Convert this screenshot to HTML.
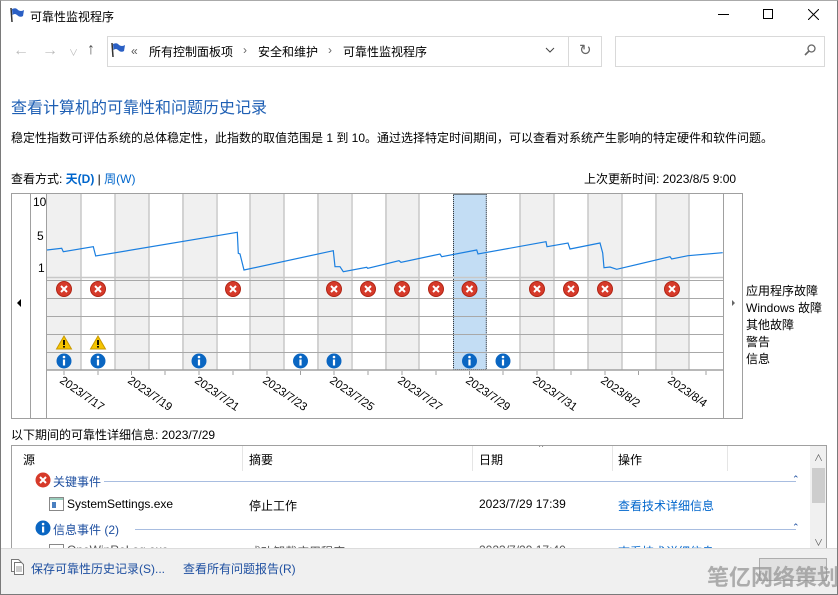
<!DOCTYPE html>
<html><head><meta charset="utf-8">
<style>
*{margin:0;padding:0;box-sizing:border-box}
body{width:838px;height:595px;overflow:hidden;background:#fff;font-family:"Liberation Sans","Noto Sans CJK SC",sans-serif;font-size:12px;color:#000;position:relative}
.a{position:absolute;white-space:nowrap}
.blue{color:#0066cc}
</style></head><body>
<div class="a" style="left:0;top:0;width:838px;height:595px;border:1px solid #7a7a7a;border-top:1px solid #aaa"></div>
<!-- title bar -->
<svg class="a" style="left:9px;top:7px" width="16" height="16" viewBox="0 0 16 16"><path d="M2 1 L3 15" stroke="#333" stroke-width="1.5"/><path d="M3 2 Q7 0 9 3 Q12 5 15 3 L14 9 Q11 11 8 8 Q6 6 3.5 8 Z" fill="#2a5fc4"/></svg>
<div class="a" style="left:30px;top:8px;font-size:12px">可靠性监视程序</div>
<div class="a" style="left:718px;top:14px;width:11px;height:1px;background:#000"></div>
<div class="a" style="left:763px;top:9px;width:10px;height:10px;border:1px solid #000"></div>
<svg class="a" style="left:808px;top:9px" width="11" height="11"><path d="M0 0L11 11M11 0L0 11" stroke="#000" stroke-width="1"/></svg>
<!-- nav -->
<div class="a" style="left:13px;top:42px;color:#bbb;font-size:16px">←</div>
<div class="a" style="left:42px;top:42px;color:#bbb;font-size:16px">→</div>
<div class="a" style="left:69px;top:46px;color:#bbb;font-size:9px">∨</div>
<div class="a" style="left:87px;top:41px;color:#555;font-size:16px">↑</div>
<div class="a" style="left:107px;top:36px;width:495px;height:31px;border:1px solid #d9d9d9"></div>
<div class="a" style="left:568px;top:36px;width:1px;height:31px;background:#d9d9d9"></div>
<svg class="a" style="left:110px;top:42px" width="16" height="16" viewBox="0 0 16 16"><path d="M2 1 L3 15" stroke="#333" stroke-width="1.5"/><path d="M3 2 Q7 0 9 3 Q12 5 15 3 L14 9 Q11 11 8 8 Q6 6 3.5 8 Z" fill="#2a5fc4"/></svg>
<div class="a" style="left:131px;top:44px;color:#555">«</div>
<div class="a" style="left:149px;top:43px">所有控制面板项</div>
<div class="a" style="left:243px;top:43px;color:#666">›</div>
<div class="a" style="left:258px;top:43px">安全和维护</div>
<div class="a" style="left:328px;top:43px;color:#666">›</div>
<div class="a" style="left:343px;top:43px">可靠性监视程序</div>
<svg class="a" style="left:545px;top:47px" width="10" height="7"><path d="M1 1L5 5L9 1" stroke="#444" fill="none"/></svg>
<div class="a" style="left:579px;top:41px;color:#666;font-size:15px">↻</div>
<div class="a" style="left:615px;top:36px;width:210px;height:31px;border:1px solid #d9d9d9"></div>
<svg class="a" style="left:804px;top:44px" width="12" height="13"><circle cx="7.5" cy="4.5" r="3.5" stroke="#666" fill="none" stroke-width="1.3"/><path d="M5 7L1 11" stroke="#666" stroke-width="1.6"/></svg>
<!-- headings -->
<div class="a" style="left:11px;top:94px;font-size:16px;color:#1e5fb4">查看计算机的可靠性和问题历史记录</div>
<div class="a" style="left:11px;top:129px">稳定性指数可评估系统的总体稳定性，此指数的取值范围是 1 到 10。通过选择特定时间期间，可以查看对系统产生影响的特定硬件和软件问题。</div>
<div class="a" style="left:11px;top:170px">查看方式: <span class="blue" style="font-weight:bold">天(D)</span> | <span class="blue">周(W)</span></div>
<div class="a" style="left:584px;top:170px">上次更新时间: 2023/8/5 9:00</div>
<!-- chart -->
<svg class="a" style="left:0;top:0" width="838" height="420" font-family="Liberation Sans,Noto Sans CJK SC,sans-serif" font-size="12">
<defs>
<g id="er"><circle r="7.5" fill="#d63a2a"/><circle r="7.5" fill="none" stroke="#b02414"/><path d="M-3 -3L3 3M3 -3L-3 3" stroke="#fff" stroke-width="2"/></g>
<g id="in"><circle r="7.5" fill="#0a66c2"/><rect x="-1.1" y="-1.5" width="2.2" height="6" fill="#fff"/><circle cy="-4" r="1.3" fill="#fff"/></g>
<g id="wa"><path d="M0 -7L7.5 6H-7.5Z" fill="#f5c400" stroke="#c99a00"/><rect x="-0.9" y="-3" width="1.8" height="5" fill="#000"/><rect x="-0.9" y="3" width="1.8" height="1.6" fill="#000"/></g>
</defs>
<rect x="11.5" y="193.5" width="731" height="225" fill="#fff" stroke="#a0a0a0"/>
<line x1="30.5" y1="193" x2="30.5" y2="418" stroke="#a0a0a0"/>
<line x1="46.5" y1="193" x2="46.5" y2="418" stroke="#a0a0a0"/>
<line x1="723.5" y1="193" x2="723.5" y2="418" stroke="#a0a0a0"/>
<g fill="#f0f0f0">
<rect x="47" y="194" width="34" height="176"/><rect x="115" y="194" width="34" height="176"/><rect x="182" y="194" width="34" height="176"/><rect x="250" y="194" width="34" height="176"/><rect x="317" y="194" width="34" height="176"/><rect x="385" y="194" width="34" height="176"/><rect x="520" y="194" width="34" height="176"/><rect x="588" y="194" width="34" height="176"/><rect x="655" y="194" width="34" height="176"/>
</g>
<rect x="453" y="194" width="33.8" height="176" fill="#c3ddf4"/>
<rect x="453.5" y="194.5" width="32.8" height="175" fill="none" stroke="#222" stroke-dasharray="1 1"/>
<g stroke="#c8c8c8" stroke-width="1.5">
<line x1="81" y1="194" x2="81" y2="370"/><line x1="115" y1="194" x2="115" y2="370"/><line x1="149" y1="194" x2="149" y2="370"/><line x1="183" y1="194" x2="183" y2="370"/><line x1="217" y1="194" x2="217" y2="370"/><line x1="250" y1="194" x2="250" y2="370"/><line x1="284" y1="194" x2="284" y2="370"/><line x1="318" y1="194" x2="318" y2="370"/><line x1="352" y1="194" x2="352" y2="370"/><line x1="386" y1="194" x2="386" y2="370"/><line x1="419" y1="194" x2="419" y2="370"/><line x1="520" y1="194" x2="520" y2="370"/><line x1="554" y1="194" x2="554" y2="370"/><line x1="588" y1="194" x2="588" y2="370"/><line x1="622" y1="194" x2="622" y2="370"/><line x1="656" y1="194" x2="656" y2="370"/><line x1="689" y1="194" x2="689" y2="370"/>
</g>
<g stroke="#c8c8c8" stroke-width="1.5"><line x1="47" y1="277.5" x2="723" y2="277.5"/></g>
<g stroke="#a8a8a8" stroke-width="1"><line x1="47" y1="280.5" x2="723" y2="280.5"/><line x1="47" y1="298.5" x2="723" y2="298.5"/><line x1="47" y1="316.5" x2="723" y2="316.5"/><line x1="47" y1="334.5" x2="723" y2="334.5"/><line x1="47" y1="352.5" x2="723" y2="352.5"/></g>
<line x1="47" y1="370" x2="723" y2="370" stroke="#a0a0a0" stroke-width="1.5"/>
<g stroke="#a0a0a0"><path d="M64 371v4M98 371v4M131.5 371v4M165 371v4M199 371v4M233 371v4M267 371v4M300.5 371v4M334 371v4M368 371v4M402 371v4M436 371v4M469.5 371v4M503 371v4M537 371v4M571 371v4M605 371v4M638.5 371v4M672 371v4M706 371v4"/></g>
<polyline fill="none" stroke="#1a7fe0" stroke-width="1.2" points="47,250 61.7,248.3 63.3,251.7 93.3,246.7 95.7,256 237.3,232.3 238.3,253.3 240,254 244,270 333.3,250.7 335,266.7 340,266.7 343.3,271.7 366.7,267.3 367.7,268.3 399,260.7 401,262.3 440,254 441.7,256.7 476.7,250 478,254 546,241.7 547,246.7 568,243 570,249 600,243 602.7,253 604,267.7 610,267 616.7,269.3 670,256.7 671.7,259 688,255.7 722.7,252.7"/>
<text x="33" y="206">10</text><text x="37" y="240">5</text><text x="38" y="272">1</text>
<path d="M17 303l4 -4v8z" fill="#000"/>
<path d="M732 300l3 3l-3 3z" fill="#666"/>
<g transform="translate(0,289)"><use href="#er" x="64"/><use href="#er" x="98"/><use href="#er" x="233"/><use href="#er" x="334"/><use href="#er" x="368"/><use href="#er" x="402"/><use href="#er" x="436"/><use href="#er" x="469.5"/><use href="#er" x="537"/><use href="#er" x="571"/><use href="#er" x="605"/><use href="#er" x="672"/></g>
<g transform="translate(0,343)"><use href="#wa" x="64"/><use href="#wa" x="98"/></g>
<g transform="translate(0,361)"><use href="#in" x="64"/><use href="#in" x="98"/><use href="#in" x="199"/><use href="#in" x="300.5"/><use href="#in" x="334"/><use href="#in" x="469.5"/><use href="#in" x="503"/></g>
<g font-size="11.5">
<text transform="translate(59,382) rotate(35)">2023/7/17</text>
<text transform="translate(127,382) rotate(35)">2023/7/19</text>
<text transform="translate(194,382) rotate(35)">2023/7/21</text>
<text transform="translate(262,382) rotate(35)">2023/7/23</text>
<text transform="translate(329,382) rotate(35)">2023/7/25</text>
<text transform="translate(397,382) rotate(35)">2023/7/27</text>
<text transform="translate(465,382) rotate(35)">2023/7/29</text>
<text transform="translate(532,382) rotate(35)">2023/7/31</text>
<text transform="translate(600,382) rotate(35)">2023/8/2</text>
<text transform="translate(667,382) rotate(35)">2023/8/4</text>
</g>
<text x="746" y="295">应用程序故障</text>
<text x="746" y="312">Windows 故障</text>
<text x="746" y="329">其他故障</text>
<text x="746" y="346">警告</text>
<text x="746" y="363">信息</text>
</svg>
<!-- details -->
<div class="a" style="left:11px;top:426px">以下期间的可靠性详细信息: 2023/7/29</div>
<div class="a" style="left:11px;top:445px;width:816px;height:104px;border:1px solid #a0a0a0;border-bottom:none;overflow:hidden">
 <div class="a" style="left:798px;top:0;width:17px;height:104px;background:#f0f0f0"></div>
 <div class="a" style="left:800px;top:22px;width:13px;height:35px;background:#cdcdcd"></div>
 <div class="a" style="left:802px;top:5px;font-size:9px;color:#555">∧</div>
 <div class="a" style="left:802px;top:90px;font-size:9px;color:#555">∨</div>
 <div class="a" style="left:11px;top:5px">源</div>
 <div class="a" style="left:237px;top:5px">摘要</div>
 <div class="a" style="left:467px;top:5px">日期</div>
 <div class="a" style="left:606px;top:5px">操作</div>
 <div class="a" style="left:527px;top:-4px;font-size:9px;color:#666">^</div>
 <div class="a" style="left:230px;top:0;width:1px;height:25px;background:#e5e5e5"></div>
 <div class="a" style="left:460px;top:0;width:1px;height:25px;background:#e5e5e5"></div>
 <div class="a" style="left:600px;top:0;width:1px;height:25px;background:#e5e5e5"></div>
 <div class="a" style="left:715px;top:0;width:1px;height:25px;background:#e5e5e5"></div>
 <svg class="a" style="left:23px;top:26px" width="16" height="16"><circle cx="8" cy="8" r="7.5" fill="#d63a2a"/><path d="M5 5L11 11M11 5L5 11" stroke="#fff" stroke-width="2"/></svg>
 <div class="a blue" style="left:41px;top:27px;color:#1e4fa0">关键事件</div>
 <div class="a" style="left:92px;top:35px;width:692px;height:1px;background:#a8bde0"></div>
 <div class="a" style="left:780px;top:28px;font-size:9px;color:#1e4fa0">⌃</div>
 <svg class="a" style="left:37px;top:51px" width="15" height="14"><rect x="0.5" y="0.5" width="14" height="13" fill="#fff" stroke="#888"/><rect x="1" y="1" width="13" height="2" fill="#9cb"/><rect x="3" y="5" width="4" height="6" fill="#4a7fc0"/></svg>
 <div class="a" style="left:55px;top:51px">SystemSettings.exe</div>
 <div class="a" style="left:237px;top:51px">停止工作</div>
 <div class="a" style="left:467px;top:51px">2023/7/29 17:39</div>
 <div class="a blue" style="left:606px;top:51px">查看技术详细信息</div>
 <svg class="a" style="left:23px;top:74px" width="16" height="16"><circle cx="8" cy="8" r="7.5" fill="#0a66c2"/><rect x="7" y="6.5" width="2.2" height="6" fill="#fff"/><circle cx="8.1" cy="4" r="1.3" fill="#fff"/></svg>
 <div class="a" style="left:41px;top:75px;color:#1e4fa0">信息事件 (2)</div>
 <div class="a" style="left:123px;top:83px;width:661px;height:1px;background:#a8bde0"></div>
 <div class="a" style="left:780px;top:76px;font-size:9px;color:#1e4fa0">⌃</div>
 <div class="a" style="left:37px;top:98px;width:15px;height:10px;border:1px solid #888"></div>
 <div class="a" style="left:55px;top:97px;color:#555">OneWinReLog.exe</div>
 <div class="a" style="left:237px;top:97px;color:#555">成功卸载应用程序</div>
 <div class="a" style="left:467px;top:97px;color:#555">2023/7/29 17:40</div>
 <div class="a blue" style="left:606px;top:97px">查看技术详细信息</div>
</div>
<div class="a" style="left:1px;top:548px;width:836px;height:46px;background:#f0f0f0;border-top:1px solid #dcdcdc"></div>
<svg class="a" style="left:11px;top:559px" width="13" height="16"><path d="M0.5 0.5h7l3 3v9h-10z" fill="#fff" stroke="#777"/><path d="M3.5 3.5h7l2 2v10h-9z" fill="#fff" stroke="#777"/><path d="M5 8h6M5 10h6M5 12h6" stroke="#999"/></svg>
<div class="a blue" style="left:31px;top:560px;color:#1e4fa0">保存可靠性历史记录(S)...</div>
<div class="a blue" style="left:183px;top:560px;color:#1e4fa0">查看所有问题报告(R)</div>
<div class="a" style="left:759px;top:558px;width:68px;height:23px;border:1px solid #adadad;background:#e1e1e1"></div>
<div class="a" style="left:707px;top:560px;font-size:22px;font-weight:bold;color:rgba(150,150,150,0.75)">笔亿网络策划</div>
</body></html>
